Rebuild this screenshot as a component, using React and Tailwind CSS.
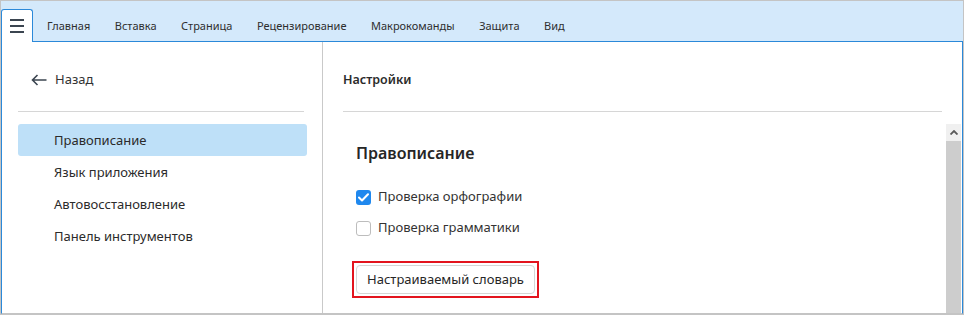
import React from "react";

const font = { fontFamily: '"Noto Sans", "Open Sans", sans-serif' };

function Hamburger() {
  return (
    <svg width="14" height="14" viewBox="0 0 14 14" fill="none">
      <path d="M0 1h14M0 7h14M0 13h14" stroke="#3b4550" strokeWidth="2" />
    </svg>
  );
}

function BackArrow() {
  return (
    <svg width="16" height="12" viewBox="0 0 16 12" fill="none">
      <path d="M1.5 6h14M6.5 1L1.5 6l5 5" stroke="#3b4550" strokeWidth="1.6" />
    </svg>
  );
}

function Check() {
  return (
    <svg width="11" height="9" viewBox="0 0 11 9" fill="none">
      <path d="M1 4.5l3 3L10 1.2" stroke="#fff" strokeWidth="2" strokeLinecap="round" strokeLinejoin="round" />
    </svg>
  );
}

const tabs = ["Главная", "Вставка", "Страница", "Рецензирование", "Макрокоманды", "Защита", "Вид"];
const items = ["Правописание", "Язык приложения", "Автовосстановление", "Панель инструментов"];

export default function App() {
  return (
    <div
      className="w-[964px] h-[315px] border border-[#c4c4c4] bg-white flex flex-col text-[#2b2b2b] overflow-hidden"
      style={font}
    >
      {/* toolbar */}
      <div className="h-[41px] shrink-0 bg-[#d4e9fb] border-b border-[#2b89d9] flex items-end">
        <div className="w-[32px] h-[33px] -mb-px bg-white border border-b-0 border-[#2b89d9] rounded-t-[3px] flex items-center justify-center">
          <Hamburger />
        </div>
        <div className="flex items-center h-[32px] pt-[2px] ml-[14px] gap-[24.5px] text-[11px] text-[#2e2e2e]">
          {tabs.map((t) => (
            <span key={t}>{t}</span>
          ))}
        </div>
      </div>

      {/* content */}
      <div className="flex-1 min-h-0 flex border-l border-r border-l-[#2b89d9] border-r-[#2b89d9] border-b border-b-[#c4c4c4]">
        {/* left panel */}
        <div className="w-[321px] shrink-0 border-r border-[#c9c9c9] pl-[16px] pr-[15px] flex flex-col">
          <div className="mt-[22px] h-[32px] flex items-center pl-[13px] gap-[8px] text-[13px] text-[#333]">
            <BackArrow />
            <span>Назад</span>
          </div>
          <div className="mt-[15px] h-px bg-[#d6d6d6] mr-[3px]" />
          <div className="mt-[12px] flex flex-col text-[13px] text-[#2b2b2b]">
            {items.map((it, i) => (
              <div
                key={it}
                className={
                  i === 0
                    ? "h-[32px] flex items-center pt-[2px] pl-[36px] bg-[#bee0f8] rounded-[3px]"
                    : "h-[32px] flex items-center pt-[2px] pl-[36px]"
                }
              >
                {it}
              </div>
            ))}
          </div>
        </div>

        {/* right panel */}
        <div className="flex-1 min-w-0 flex flex-col">
          <div className="px-[20px]">
            <div className="mt-[26px] h-[24px] flex items-center text-[12.5px] font-semibold text-[#2b2b2b]">
              Настройки
            </div>
            <div className="mt-[19px] h-px bg-[#d6d6d6]" />
          </div>
          <div className="flex-1 min-h-0 flex mt-[12px]">
            <div className="flex-1 min-w-0 overflow-hidden pl-[33px]">
              <div className="mt-[17px] h-[24px] flex items-center text-[16px] font-semibold text-[#262626]">
                Правописание
              </div>
              <div className="mt-[20px] h-[24px] flex items-center gap-[7px] text-[13px] text-[#333]">
                <span className="w-[15px] h-[15px] rounded-[3px] bg-[#1f88ee] flex items-center justify-center">
                  <Check />
                </span>
                <span>Проверка орфографии</span>
              </div>
              <div className="mt-[7px] h-[24px] flex items-center gap-[7px] text-[13px] text-[#333]">
                <span className="w-[15px] h-[15px] rounded-[3px] border border-[#bdbdbd] bg-white" />
                <span>Проверка грамматики</span>
              </div>
              <div className="mt-[21px] ml-[-4px] inline-flex border-2 border-[#e3141e] p-[2px]">
                <button className="w-[179px] h-[29px] rounded-[4px] border border-[#d6d6d6] bg-white text-[13px] text-[#262626] flex items-center justify-center">
                  Настраиваемый словарь
                </button>
              </div>
            </div>
            <div className="w-[15px] mr-px shrink-0 flex flex-col">
              <div className="h-[17px] bg-[#f0f0f0] flex items-center justify-center">
                <svg width="8" height="5" viewBox="0 0 8 5">
                  <path d="M0.5 4.5L4 1l3.5 3.5" stroke="#5a5a5a" strokeWidth="1.8" fill="none" />
                </svg>
              </div>
              <div className="flex-1 bg-[#cdcdcd]" />
            </div>
          </div>
        </div>
      </div>
    </div>
  );
}
